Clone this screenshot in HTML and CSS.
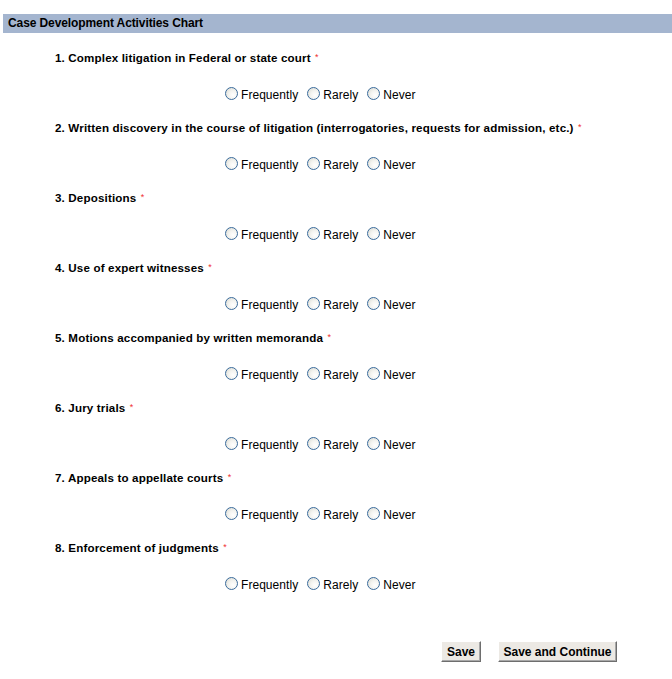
FILE: index.html
```html
<!DOCTYPE html>
<html>
<head>
<meta charset="utf-8">
<link rel="stylesheet" href="styles.css">
</head>
<body>
<div class="page">
  <div class="header">Case Development Activities Chart</div>
  <div class="questions">
    <div class="item">
      <div class="question">1. Complex litigation in Federal or state court <span class="req">*</span></div>
      <div class="options">
        <label class="opt"><input type="radio" name="q1"><span>Frequently</span></label>
        <label class="opt"><input type="radio" name="q1"><span>Rarely</span></label>
        <label class="opt"><input type="radio" name="q1"><span>Never</span></label>
      </div>
    </div>
    <div class="item">
      <div class="question">2. Written discovery in the course of litigation (interrogatories, requests for admission, etc.) <span class="req">*</span></div>
      <div class="options">
        <label class="opt"><input type="radio" name="q2"><span>Frequently</span></label>
        <label class="opt"><input type="radio" name="q2"><span>Rarely</span></label>
        <label class="opt"><input type="radio" name="q2"><span>Never</span></label>
      </div>
    </div>
    <div class="item">
      <div class="question">3. Depositions <span class="req">*</span></div>
      <div class="options">
        <label class="opt"><input type="radio" name="q3"><span>Frequently</span></label>
        <label class="opt"><input type="radio" name="q3"><span>Rarely</span></label>
        <label class="opt"><input type="radio" name="q3"><span>Never</span></label>
      </div>
    </div>
    <div class="item">
      <div class="question">4. Use of expert witnesses <span class="req">*</span></div>
      <div class="options">
        <label class="opt"><input type="radio" name="q4"><span>Frequently</span></label>
        <label class="opt"><input type="radio" name="q4"><span>Rarely</span></label>
        <label class="opt"><input type="radio" name="q4"><span>Never</span></label>
      </div>
    </div>
    <div class="item">
      <div class="question">5. Motions accompanied by written memoranda <span class="req">*</span></div>
      <div class="options">
        <label class="opt"><input type="radio" name="q5"><span>Frequently</span></label>
        <label class="opt"><input type="radio" name="q5"><span>Rarely</span></label>
        <label class="opt"><input type="radio" name="q5"><span>Never</span></label>
      </div>
    </div>
    <div class="item">
      <div class="question">6. Jury trials <span class="req">*</span></div>
      <div class="options">
        <label class="opt"><input type="radio" name="q6"><span>Frequently</span></label>
        <label class="opt"><input type="radio" name="q6"><span>Rarely</span></label>
        <label class="opt"><input type="radio" name="q6"><span>Never</span></label>
      </div>
    </div>
    <div class="item">
      <div class="question">7. Appeals to appellate courts <span class="req">*</span></div>
      <div class="options">
        <label class="opt"><input type="radio" name="q7"><span>Frequently</span></label>
        <label class="opt"><input type="radio" name="q7"><span>Rarely</span></label>
        <label class="opt"><input type="radio" name="q7"><span>Never</span></label>
      </div>
    </div>
    <div class="item">
      <div class="question">8. Enforcement of judgments <span class="req">*</span></div>
      <div class="options">
        <label class="opt"><input type="radio" name="q8"><span>Frequently</span></label>
        <label class="opt"><input type="radio" name="q8"><span>Rarely</span></label>
        <label class="opt"><input type="radio" name="q8"><span>Never</span></label>
      </div>
    </div>
  </div>
  <div class="actions">
    <button class="btn btn-save" type="button">Save</button>
    <button class="btn btn-continue" type="button">Save and Continue</button>
  </div>
</div>
</body>
</html>
```
FILE: styles.css
```css
html, body {
  margin: 0;
  padding: 0;
  background: #ffffff;
}
body {
  font-family: "Liberation Sans", Arial, sans-serif;
  color: #000;
}
.page {
  padding: 14px 0 0 3px;
}
.header {
  background: #a4b5cf;
  height: 19px;
  line-height: 19px;
  padding-left: 5px;
  font-size: 12px;
  font-weight: bold;
  letter-spacing: -0.1px;
  color: #000;
}
.questions {
  display: flex;
  flex-direction: column;
  gap: 19px;
  padding-top: 18px;
}
.question {
  padding-left: 52px;
  font-size: 11.6px;
  font-weight: bold;
  line-height: 14px;
  height: 14px;
  letter-spacing: 0.15px;
}
.req {
  color: #f03030;
  font-size: 9px;
  font-weight: normal;
  vertical-align: 2px;
  line-height: 9px;
  margin-left: 1px;
}
.options {
  display: flex;
  align-items: center;
  padding-left: 222px;
  margin-top: 21px;
  height: 16px;
  font-size: 12px;
}
.opt {
  display: flex;
  align-items: center;
  margin-right: 9px;
}
.opt input {
  appearance: none;
  -webkit-appearance: none;
  width: 13px;
  height: 13px;
  margin: 0 3px 0 0;
  border: 1px solid #3a6b9c;
  border-radius: 50%;
  background: radial-gradient(circle at 65% 65%, #ffffff 0%, #f3f3ef 45%, #d6d6ce 100%);
  box-sizing: border-box;
  position: relative;
  top: -1px;
}
.opt span {
  line-height: 16px;
  padding-top: 2px;
  letter-spacing: 0.05px;
}
.actions {
  display: flex;
  gap: 17px;
  padding-left: 438px;
  margin-top: 49px;
}
.btn {
  font-family: "Liberation Sans", Arial, sans-serif;
  font-size: 12px;
  font-weight: bold;
  height: 21px;
  padding: 0;
  background: #ece9e4;
  border: 1px solid;
  border-color: #ffffff #6e6e6e #6e6e6e #ffffff;
  box-shadow: inset -1px -1px 0 #a8a8a8;
  color: #000;
  border-radius: 0;
}
.btn-save {
  width: 40px;
}
.btn-continue {
  width: 119px;
}
```
